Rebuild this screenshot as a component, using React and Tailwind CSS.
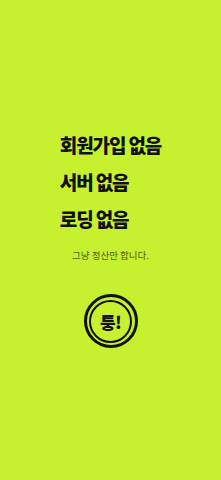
export default function App() {
  return (
    <div
      className="min-h-[480px] w-full bg-[#c7f12e] flex flex-col items-center"
      style={{ fontFamily: '"Noto Sans CJK KR", "Noto Sans", sans-serif' }}
    >
      <div className="pt-[133px] flex flex-col gap-[13px] text-[19px] font-extrabold leading-[24px] tracking-[-0.06em] text-[#111]">
        <div>회원가입 없음</div>
        <div>서버 없음</div>
        <div>로딩 없음</div>
      </div>
      <p className="mt-[17px] text-[9.5px] leading-[14px] text-[#4f5f12]">
        그냥 정산만 합니다.
      </p>
      <button className="mt-[32px] w-[54px] h-[54px] rounded-full border-[3px] border-[#111] flex items-center justify-center">
        <span className="w-[43px] h-[43px] rounded-full border-2 border-[#111] flex items-center justify-center text-[17px] font-black leading-none tracking-[-0.04em] text-[#111]">
          퉁!
        </span>
      </button>
    </div>
  );
}
